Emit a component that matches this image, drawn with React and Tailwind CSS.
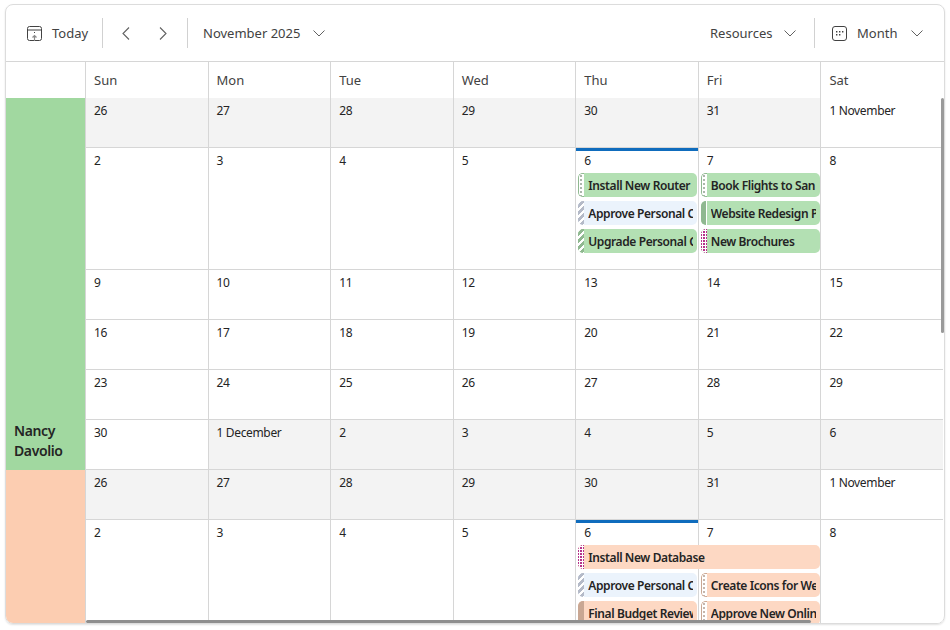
import React from "react";

const Down = ({ className = "" }) => (
  <svg className={className} width="12" height="7" viewBox="0 0 12 7" fill="none" stroke="#616161" strokeWidth="1">
    <path d="M0.5 0.5 L6 6 L11.5 0.5" />
  </svg>
);
const Left = () => (
  <svg width="8" height="13" viewBox="0 0 8 13" fill="none" stroke="#616161" strokeWidth="1.1">
    <path d="M7 0.5 L1 6.5 L7 12.5" />
  </svg>
);
const Right = () => (
  <svg width="8" height="13" viewBox="0 0 8 13" fill="none" stroke="#616161" strokeWidth="1.1">
    <path d="M1 0.5 L7 6.5 L1 12.5" />
  </svg>
);
const TodayIcon = () => (
  <svg width="15" height="15" viewBox="0 0 15 15" fill="none">
    <rect x="0.5" y="0.5" width="14" height="14" rx="2" stroke="#424242" />
    <path d="M1 4 H14" stroke="#424242" />
    <rect x="7" y="6" width="1" height="1" fill="#424242" />
    <path d="M7.5 15 V9.5 M5.5 11.5 L7.5 9.5 L9.5 11.5" stroke="#8a8a8a" strokeWidth="1.2" />
  </svg>
);
const MonthIcon = () => (
  <svg width="15" height="15" viewBox="0 0 15 15" fill="none">
    <rect x="0.5" y="0.5" width="14" height="14" rx="2.5" stroke="#424242" />
    <path d="M4 5h1.4v1.4H4zM7 5h1.4v1.4H7zM10 5h1.4v1.4H10zM4 8h1.4v1.4H4zM7 8h1.4v1.4H7z" fill="#424242" />
  </svg>
);

const stripes = {
  tentGreen: "border border-r-0 border-[#8fb890] bg-white bg-[radial-gradient(circle,#a9b5a9_0.7px,transparent_1px)] bg-[length:4px_4px]",
  tentPeach: "border border-r-0 border-[#c9a793] bg-white bg-[radial-gradient(circle,#c4b5ab_0.7px,transparent_1px)] bg-[length:4px_4px]",
  grey: "bg-[repeating-linear-gradient(135deg,#ffffff_0_2.5px,#b4bac8_2.5px_5px)]",
  green: "bg-[repeating-linear-gradient(135deg,#ffffff_0_2.5px,#8fb890_2.5px_5px)]",
  solidGreen: "bg-[#8fb890] border-r border-white",
  solidPeach: "bg-[#c9a793]",
  magenta: "bg-[#b5338a] bg-[radial-gradient(circle,#ffffff_1px,transparent_1.2px)] bg-[length:3px_3px]",
};
const bodies = { green: "bg-[#b3e0b3]", blue: "bg-[#ebf3fc]", peach: "bg-[#fdd8c3]" };

function Event({ text, stripe, body, wide }) {
  return (
    <div className={`relative z-10 flex h-6 mb-1 ml-[2px] rounded-[5px] overflow-hidden ${bodies[body]} ${wide ? "w-[242px]" : "w-[119px]"}`}>
      <div className={`w-[6px] h-full shrink-0 rounded-l-[4px] ${stripes[stripe]}`} />
      <div className={`ml-1 overflow-hidden whitespace-nowrap text-xs font-semibold tracking-[-0.4px] leading-[25px] text-[#242424] ${wide ? "w-[230px]" : "w-[105px]"}`}>{text}</div>
    </div>
  );
}

function Cell({ label, grey, today, events, skip, h }) {
  return (
    <div className={`relative border-l border-b border-[#d6d6d6] ${grey ? "bg-[#f3f3f3]" : "bg-white"} ${h}`}>
      {today && <div className="absolute left-0 right-0 top-0 h-[3px] bg-[#0f6cbd] z-10" />}
      <div className="pl-2 pt-[5px] h-[25px] text-xs leading-4 tracking-[-0.35px] text-[#242424]">{label}</div>
      {skip && <div className="h-7" />}
      {events && events.map((e) => <Event key={e.text} {...e} />)}
    </div>
  );
}

const w1 = [
  [["26", 1], ["27", 1], ["28", 1], ["29", 1], ["30", 1], ["31", 1], ["1 November", 0]],
  [["2"], ["3"], ["4"], ["5"], ["6"], ["7"], ["8"]],
  [["9"], ["10"], ["11"], ["12"], ["13"], ["14"], ["15"]],
  [["16"], ["17"], ["18"], ["19"], ["20"], ["21"], ["22"]],
  [["23"], ["24"], ["25"], ["26"], ["27"], ["28"], ["29"]],
  [["30", 0], ["1 December", 1], ["2", 1], ["3", 1], ["4", 1], ["5", 1], ["6", 1]],
];

const greenThu = [
  { text: "Install New Router in Dev Room", stripe: "tentGreen", body: "green" },
  { text: "Approve Personal Computer Upgrade", stripe: "grey", body: "blue" },
  { text: "Upgrade Personal Computers", stripe: "green", body: "green" },
];
const greenFri = [
  { text: "Book Flights to San Fran Sales Trip", stripe: "tentGreen", body: "green" },
  { text: "Website Redesign Plan", stripe: "solidGreen", body: "green" },
  { text: "New Brochures", stripe: "magenta", body: "green" },
];
const peachThu = [
  { text: "Install New Database", stripe: "magenta", body: "peach", wide: true },
  { text: "Approve Personal Computer Upgrade", stripe: "grey", body: "blue" },
  { text: "Final Budget Review", stripe: "solidPeach", body: "peach" },
];
const peachFri = [
  { text: "Create Icons for Website", stripe: "tentPeach", body: "peach" },
  { text: "Approve New Online Marketing", stripe: "tentPeach", body: "peach" },
];

function Week({ days, h, thu, fri, skipFri, todayThu }) {
  return days.map(([label, grey], i) => (
    <Cell
      key={i}
      label={label}
      grey={grey}
      h={h}
      today={todayThu && i === 4}
      events={i === 4 ? thu : i === 5 ? fri : undefined}
      skip={i === 5 && skipFri}
    />
  ));
}

export default function App() {
  return (
    <div className="h-[630px] w-[950px] bg-white pl-[5px] pt-1 font-['Noto_Sans','Open_Sans',sans-serif]">
      <div className="flex h-[620px] w-[940px] flex-col overflow-hidden rounded-lg border border-[#dcdcdc] shadow-[0_1px_2px_rgba(0,0,0,0.12)]">
        <div className="flex h-[57px] shrink-0 items-center border-b border-[#d6d6d6] text-[13px] text-[#424242]">
          <div className="ml-[21px]"><TodayIcon /></div>
          <span className="ml-[10px] mt-[2px] w-[36px] whitespace-nowrap">Today</span>
          <div className="ml-[14px] h-[30px] w-px bg-[#d1d1d1]" />
          <div className="ml-[19px]"><Left /></div>
          <div className="ml-[29px]"><Right /></div>
          <div className="ml-5 h-[30px] w-px bg-[#d1d1d1]" />
          <span className="ml-[15px] mt-[2px] w-[98px] whitespace-nowrap">November 2025</span>
          <Down className="ml-3" />
          <span className="ml-auto mt-[2px] w-[62px] whitespace-nowrap">Resources</span>
          <Down className="ml-3" />
          <div className="ml-[18px] h-[30px] w-px bg-[#d1d1d1]" />
          <div className="ml-[17px]"><MonthIcon /></div>
          <span className="ml-[10px] mt-[2px] w-[41px] whitespace-nowrap">Month</span>
          <Down className="ml-[13px] mr-[21px]" />
        </div>

        <div className="grid h-9 shrink-0 grid-cols-[79px_repeat(7,122.57px)] text-[13px] leading-9 text-[#424242]">
          <div className="border-b border-[#d6d6d6]" />
          {["Sun", "Mon", "Tue", "Wed", "Thu", "Fri", "Sat"].map((d) => (
            <div key={d} className="border-b border-l border-[#d6d6d6] pl-2">{d}</div>
          ))}
        </div>

        <div className="relative min-h-0 flex-1 overflow-hidden">
          <div className="flex">
            <div className="flex h-[372px] w-[79px] shrink-0 items-end bg-[#a1d8a0] pb-[9px] pl-2 text-sm font-semibold leading-5 tracking-[-0.4px] text-[#242424]">
              <div>Nancy<br />Davolio</div>
            </div>
            <div className="grid content-start grid-cols-[repeat(7,122.57px)]">
              <Week days={w1[0]} h="h-[50px]" />
              <Week days={w1[1]} h="h-[122px]" thu={greenThu} fri={greenFri} todayThu />
              <Week days={w1[2]} h="h-[50px]" />
              <Week days={w1[3]} h="h-[50px]" />
              <Week days={w1[4]} h="h-[50px]" />
              <Week days={w1[5]} h="h-[50px]" />
            </div>
          </div>
          <div className="flex">
            <div className="h-[372px] w-[79px] shrink-0 bg-[#fccdb1]" />
            <div className="grid content-start grid-cols-[repeat(7,122.57px)]">
              <Week days={w1[0]} h="h-[50px]" />
              <Week days={w1[1]} h="h-[122px]" thu={peachThu} fri={peachFri} skipFri todayThu />
            </div>
          </div>
          <div className="absolute right-0 top-0 z-20 h-[235px] w-[3px] rounded-sm bg-[#9a9a9a]" />
          <div className="absolute bottom-0 left-[80px] z-20 h-[3px] w-[725px] rounded-sm bg-[#8e8e8e]" />
        </div>
      </div>
    </div>
  );
}
